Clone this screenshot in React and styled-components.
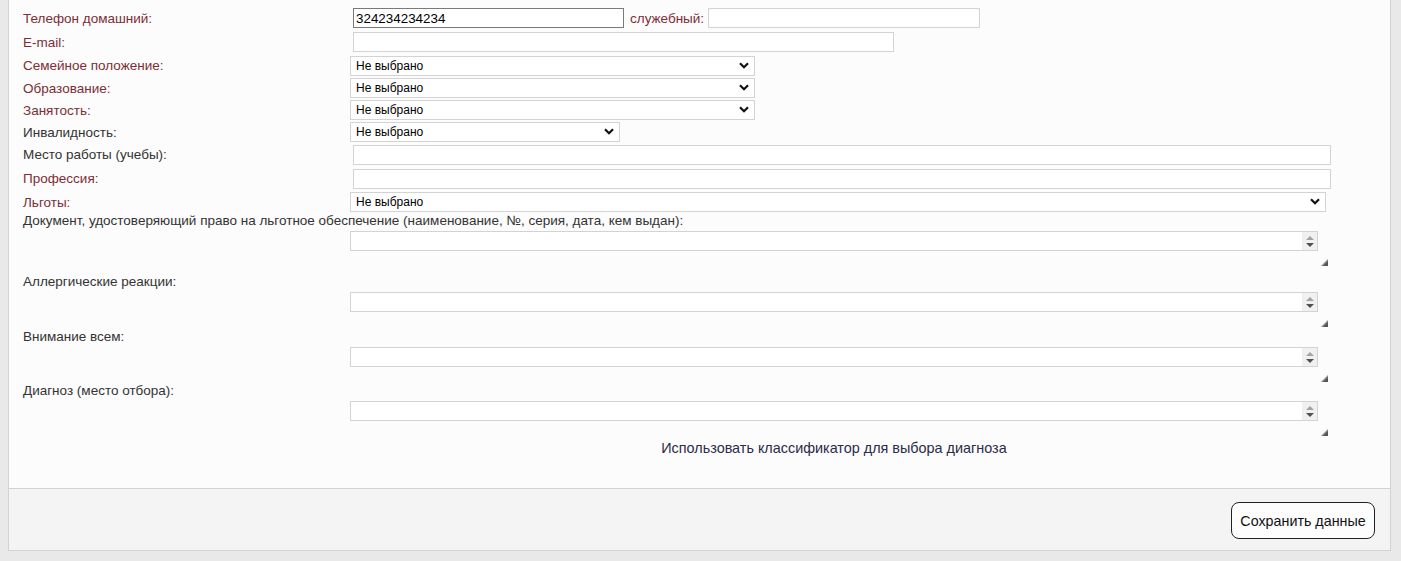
import React from 'react'
import styled, { createGlobalStyle } from 'styled-components'

const GlobalStyle = createGlobalStyle`
  body {
    margin: 0;
    background: #e8e9e8;
    font-family: "Liberation Sans", Arial, sans-serif;
  }
`

const MAROON = '#7d2d35'
const DARK = '#333333'

function Chevron() {
  return (
    <svg width="10" height="7" viewBox="0 0 10 7">
      <path d="M1 1.2 L5 5.2 L9 1.2" fill="none" stroke="#111" strokeWidth="2.2" />
    </svg>
  )
}

function Grip() {
  return (
    <svg width="7" height="7" viewBox="0 0 7 7">
      <path d="M7 0 L7 7 L0 7 Z" fill="#888" />
      <path d="M7 2 L7 7 L2 7 Z" fill="#555" />
    </svg>
  )
}

function Select({ width }) {
  return (
    <SelectWrap width={width}>
      <SelectBox defaultValue="0">
        <option value="0">Не выбрано</option>
      </SelectBox>
      <ChevronSlot>
        <Chevron />
      </ChevronSlot>
    </SelectWrap>
  )
}

function TextareaBlock({ label, color, top }) {
  return (
    <Block top={top}>
      <BlockLabel color={color}>{label}</BlockLabel>
      <AreaColumn>
        <AreaBox>
          <AreaInput rows={1} />
          <Spinner>
            <Arrow up />
            <Arrow />
          </Spinner>
        </AreaBox>
        <GripSlot>
          <Grip />
        </GripSlot>
      </AreaColumn>
    </Block>
  )
}

export default function App() {
  return (
    <>
      <GlobalStyle />
      <Page>
        <Panel>
          <Content>
            <Row h={24}>
              <Label color={MAROON}>Телефон домашний:</Label>
              <TextInput width={271} dark defaultValue="324234234234" />
              <InlineLabel color={MAROON}>служебный:</InlineLabel>
              <TextInput width={272} flush />
            </Row>
            <Row h={24}>
              <Label color={MAROON}>E-mail:</Label>
              <TextInput width={541} />
            </Row>
            <Row h={23}>
              <Label color={MAROON}>Семейное положение:</Label>
              <Select width={405} />
            </Row>
            <Row h={22}>
              <Label color={MAROON}>Образование:</Label>
              <Select width={405} />
            </Row>
            <Row h={22}>
              <Label color={MAROON}>Занятость:</Label>
              <Select width={405} />
            </Row>
            <Row h={22}>
              <Label color={DARK}>Инвалидность:</Label>
              <Select width={270} />
            </Row>
            <Row h={23}>
              <Label color={DARK}>Место работы (учебы):</Label>
              <TextInput width={978} />
            </Row>
            <Row h={25}>
              <Label color={MAROON}>Профессия:</Label>
              <TextInput width={978} />
            </Row>
            <Row h={22}>
              <Label color={MAROON}>Льготы:</Label>
              <Select width={976} />
            </Row>
            <TextareaBlock
              top={0}
              color={DARK}
              label="Документ, удостоверяющий право на льготное обеспечение (наименование, №, серия, дата, кем выдан):"
            />
            <TextareaBlock top={8} color={DARK} label="Аллергические реакции:" />
            <TextareaBlock top={2} color={DARK} label="Внимание всем:" />
            <TextareaBlock top={1} color={DARK} label="Диагноз (место отбора):" />
            <LinkRow>
              <ClassifierLink>Использовать классификатор для выбора диагноза</ClassifierLink>
            </LinkRow>
          </Content>
          <Footer>
            <SaveButton>Сохранить данные</SaveButton>
          </Footer>
        </Panel>
      </Page>
    </>
  )
}

const Page = styled.div`
  padding: 0 10px 10px 8px;
`
const Panel = styled.div`
  background: #fcfcfc;
  border: 1px solid #d3d3d3;
  border-top: none;
`
const Content = styled.div`
  padding: 6px 0 32px 14px;
`
const Row = styled.div`
  display: flex;
  align-items: center;
  height: ${(p) => p.h}px;
`
const Label = styled.div`
  width: 327px;
  flex-shrink: 0;
  font-size: 13.5px;
  color: ${(p) => p.color};
`
const InlineLabel = styled.span`
  margin-left: 6px;
  margin-right: 4px;
  font-size: 13.5px;
  color: ${(p) => p.color};
`
const TextInput = styled.input`
  box-sizing: border-box;
  width: ${(p) => p.width}px;
  height: 20px;
  margin: 0 0 0 ${(p) => (p.flush ? 0 : 3)}px;
  padding: 0 2px;
  border: 1px solid ${(p) => (p.dark ? '#7a7a7a' : '#d3d3d3')};
  background: #fff;
  font-family: "Liberation Sans", Arial, sans-serif;
  font-size: 13.4px;
  color: #000;
  outline: none;
`
const SelectWrap = styled.div`
  position: relative;
  width: ${(p) => p.width}px;
  height: 20px;
`
const SelectBox = styled.select`
  box-sizing: border-box;
  appearance: none;
  width: 100%;
  height: 100%;
  margin: 0;
  padding: 0 20px 0 5px;
  border: 1px solid #d3d3d3;
  border-radius: 0;
  background: #fff;
  font-family: "Liberation Sans", Arial, sans-serif;
  font-size: 12px;
  color: #000;
  outline: none;
`
const ChevronSlot = styled.span`
  position: absolute;
  right: 6px;
  top: 6px;
  display: flex;
  pointer-events: none;
`
const Block = styled.div`
  margin-top: ${(p) => p.top}px;
`
const BlockLabel = styled.div`
  font-size: 13.5px;
  line-height: 16px;
  color: ${(p) => p.color};
`
const AreaColumn = styled.div`
  display: flex;
  flex-direction: column;
  width: 980px;
  margin-left: 327px;
  margin-top: 2px;
`
const AreaBox = styled.div`
  box-sizing: border-box;
  display: flex;
  width: 968px;
  height: 20px;
  border: 1px solid #d3d3d3;
  background: #fff;
`
const AreaInput = styled.textarea`
  flex: 1;
  border: none;
  resize: none;
  outline: none;
  padding: 0 3px;
  background: transparent;
  font-family: "Liberation Sans", Arial, sans-serif;
  font-size: 13px;
  overflow: hidden;
`
const Spinner = styled.div`
  width: 15px;
  background: #f0f0f0;
  display: flex;
  flex-direction: column;
  align-items: center;
  justify-content: center;
  gap: 3px;
`
const Arrow = styled.span`
  width: 0;
  height: 0;
  border-left: 4px solid transparent;
  border-right: 4px solid transparent;
  ${(p) =>
    p.up
      ? 'border-bottom: 4px solid #a3a3a3;'
      : 'border-top: 4px solid #505050;'}
`
const GripSlot = styled.div`
  display: flex;
  justify-content: flex-end;
  margin-top: 8px;
  padding-right: 2px;
`
const LinkRow = styled.div`
  width: 968px;
  margin: 4px 0 0 327px;
  text-align: center;
  line-height: 16px;
`
const ClassifierLink = styled.span`
  font-size: 14.4px;
  color: #2b2b48;
  cursor: pointer;
`
const Footer = styled.div`
  display: flex;
  justify-content: flex-end;
  padding: 13px 15px 11px;
  background: #f4f4f4;
  border-top: 1px solid #d3d3d3;
`
const SaveButton = styled.button`
  box-sizing: border-box;
  width: 144px;
  height: 37px;
  padding: 0;
  border: 1px solid #222;
  border-radius: 8px;
  background: #fdfdfd;
  font-family: "Liberation Sans", Arial, sans-serif;
  font-size: 14.3px;
  color: #111;
  cursor: pointer;
`
